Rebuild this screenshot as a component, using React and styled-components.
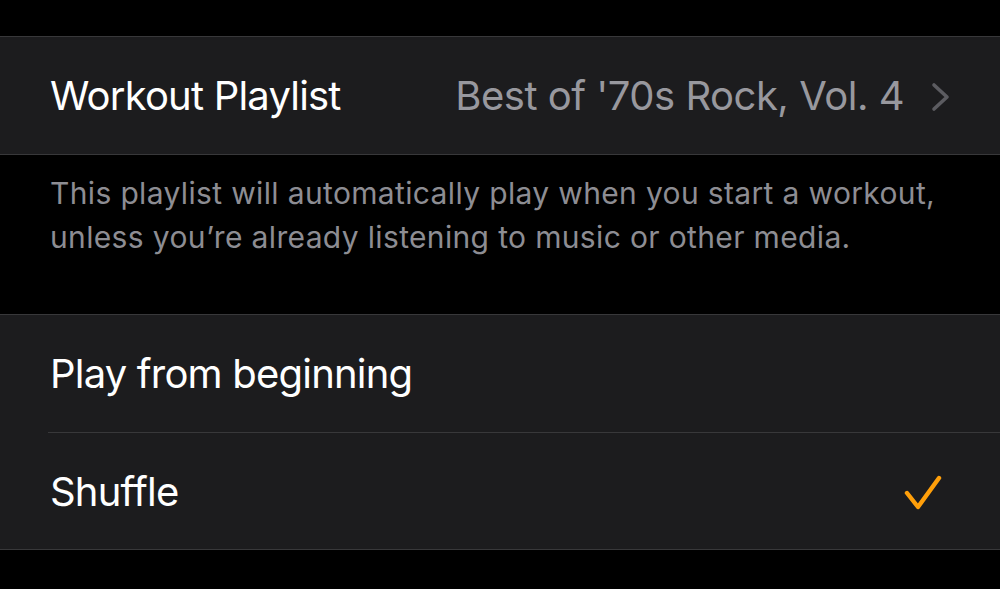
import React from 'react'
import styled, { createGlobalStyle } from 'styled-components'

const GlobalStyle = createGlobalStyle`
  html, body {
    margin: 0;
    padding: 0;
    background: #000000;
  }
  body {
    font-family: Inter, "Noto Sans", "Liberation Sans", sans-serif;
    -webkit-font-smoothing: antialiased;
  }
`

const Page = styled.div`
  width: 1000px;
  height: 589px;
  overflow: hidden;
  background: #000000;
  padding-top: 36px;
  box-sizing: border-box;
`

const Group = styled.div`
  background: #1c1c1e;
  border-top: 1px solid #38383a;
  border-bottom: 1px solid #38383a;
`

const Cell = styled.div`
  padding-left: 48px;
`

const CellInner = styled.div`
  display: flex;
  align-items: center;
  justify-content: space-between;
  height: 117px;
  box-sizing: border-box;
  padding-left: 2px;
  padding-right: ${p => p.$pad || 49}px;
  border-top: ${p => (p.$divider ? '1px solid #38383a' : 'none')};
`

const Label = styled.span`
  font-size: 40px;
  color: #ffffff;
  letter-spacing: -0.8px;
`

const Value = styled.span`
  display: flex;
  align-items: center;
  gap: 27px;
  font-size: 40px;
  letter-spacing: -0.5px;
  color: #98989e;
`

const Footer = styled.div`
  padding: 16px 50px 55px;
  font-size: 30px;
  line-height: 44px;
  letter-spacing: 0.35px;
  color: #8d8d93;
`

const Chevron = () => (
  <svg width="20" height="30" viewBox="0 0 20 30" style={{ marginTop: '2px' }}>
    <polyline
      points="3,3 16,15 3,27"
      fill="none"
      stroke="#5c5c61"
      strokeWidth="3.6"
      strokeLinecap="round"
      strokeLinejoin="round"
    />
  </svg>
)

const Check = () => (
  <svg width="40" height="40" viewBox="0 0 40 40" style={{ marginTop: '4px' }}>
    <polyline
      points="4,20 15,34 36,5"
      fill="none"
      stroke="#ff9f0a"
      strokeWidth="4.4"
      strokeLinecap="round"
      strokeLinejoin="round"
    />
  </svg>
)

const App = () => {
  return (
    <>
      <GlobalStyle />
      <Page>
        <Group>
          <Cell>
            <CellInner>
              <Label>Workout Playlist</Label>
              <Value>
                Best of '70s Rock, Vol. 4
                <Chevron />
              </Value>
            </CellInner>
          </Cell>
        </Group>
        <Footer>
          This playlist will automatically play when you start a workout,
          <br />
          unless you’re already listening to music or other media.
        </Footer>
        <Group>
          <Cell>
            <CellInner>
              <Label>Play from beginning</Label>
            </CellInner>
          </Cell>
          <Cell>
            <CellInner $divider $pad={57}>
              <Label>Shuffle</Label>
              <Check />
            </CellInner>
          </Cell>
        </Group>
      </Page>
    </>
  )
}

export default App
